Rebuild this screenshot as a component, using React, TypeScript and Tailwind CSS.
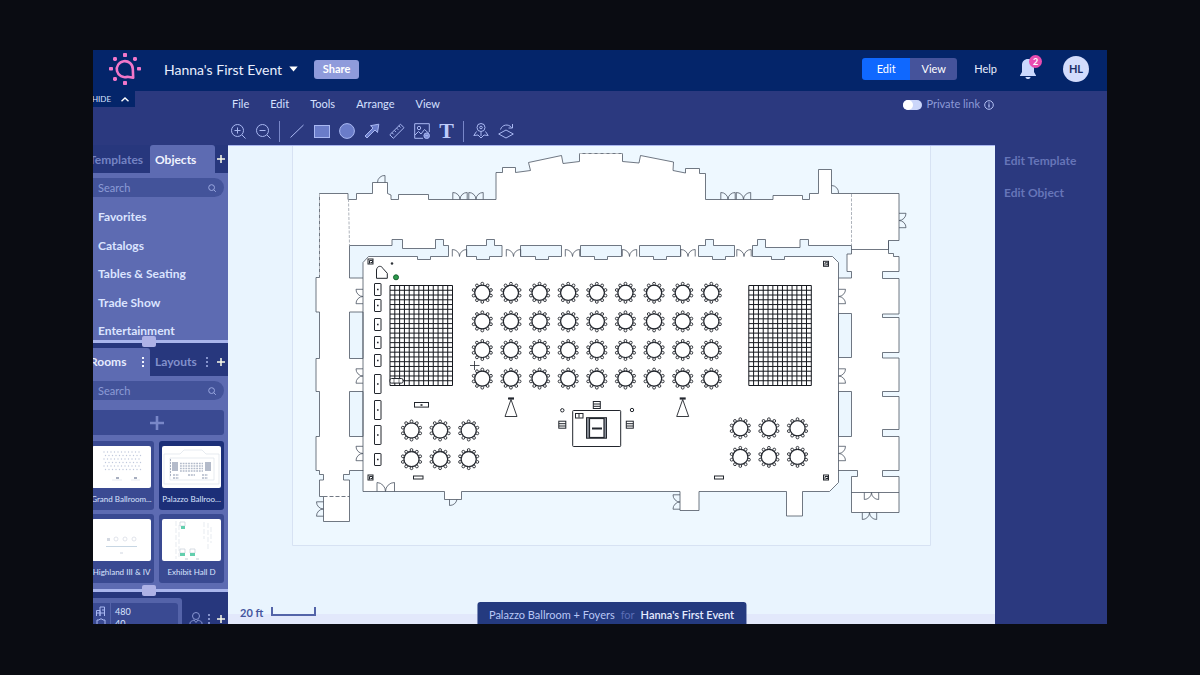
import React from "react";

const WALL = "#4d5663";
const VOID = "#ebf6fe";

const FOYER =
  "M319.5 193.5H348V199.5H356.5V193.5H372.5V182.5H387.5V193.5L391 195V199.5H398.5V194.5H428.5V199.5H496V172.5H502.5V167.5H515.5V172.5L530.5 170.5L528.5 162.5L561.5 155.5L563 163.5L579.5 161.5V153.5H622.5V161.5L639 163L640.5 155.5L673.5 162L673 170.5L685.5 173V168.5H699.5V173.5H705.5V199.5H773V195.5H802.5V199.5H809.5V193.5H818.5V169.5H831.5V193.5H899V240.5H888.5V253.5H893.5V256.5H899V271.5H882.5V278.5H899V314H882.5V317.5H899V352.5H882.5V358H899V391.5H882.5V396.5H899V429.5H882.5V436.5H899V470.5H882.5V476.5H899V512.5H851.5V476.5H857.5V470.5H838.5V482.5L829.5 491.5H802.5V516H786.5V491.5H699V510.5H680V491.5H461.5V499.5H444.5V491.5H363V470.5H349.5V474.5H343.5V480H349.5V521.5H323.5V496.5H319.5V480H323.5V474.5H319.5V470.5H316V436.5H319.5V391.5H316V358.5H319.5V312H316V277.5H319.5Z";

const VOIDS = [
  "M349.5 245.5H392V239.5H402.5V248.5H435.5V239.5H443.5V245.5H448.5V256.5H430.5V259.5H417.5V256.5H368.5L363 262.5V278H349.5Z",
  "M466.5 245.5H486.5V239.5H494.5V245.5H502V256.5H489.5V259.5H476.5V256.5H466.5Z",
  "M520.5 245.5H561.5V256.5H548.5V259.5H535.5V256.5H520.5Z",
  "M580.5 245.5H621.5V256.5H607.5V259.5H594.5V256.5H580.5Z",
  "M639.5 245.5H680.5V256.5H666.5V259.5H653.5V256.5H639.5Z",
  "M698.5 245.5H705.5V239.5H713.5V245.5H734.5V256.5H725.5V259.5H712.5V256.5H698.5Z",
  "M752.5 245.5H757.5V239.5H765.5V247.5H800V239.5H808.5V245.5H851.5V254H847V271.5H851.5V278H838.5V262.5L832.5 256.5H784.5V259.5H771.5V256.5H752.5Z",
  "M349.5 312H363V358.5H349.5Z",
  "M349.5 391.5H363V436.5H349.5Z",
  "M838.5 313.5H851.5V357.5H838.5Z",
  "M838.5 391.5H851.5V436.5H838.5Z",
];

/* Centre point and the direction in which each pair of leaves swings. */
const DOORS: [number, number, number][] = [
  [460, 199.5, 0], [476, 199.5, 0], [728, 199.5, 0], [743.5, 199.5, 0],
  [459.5, 256.5, 0], [513.5, 256.5, 0], [572.5, 256.5, 0], [629.5, 256.5, 0],
  [688, 256.5, 0], [744, 256.5, 0],
  [363, 296.5, -90], [363, 376, -90], [363, 453.5, -90],
  [323.5, 509, -90], [680, 502, -90],
  [838.5, 296.5, 90], [838.5, 376, 90], [838.5, 453.5, 90], [899, 220.5, 90],
  [871.5, 492.5, 180], [869.5, 512.5, 180],
];

const range = (n: number) => Array.from({ length: n }, (_, i) => i);

const TABLES: [number, number][] = [
  ...range(36).map((i): [number, number] => [482.3 + (i % 9) * 28.63, 292.8 + Math.floor(i / 9) * 28.6]),
  ...range(6).map((i): [number, number] => [411.5 + (i % 3) * 28.6, 430.5 + Math.floor(i / 3) * 28.6]),
  ...range(6).map((i): [number, number] => [740.3 + (i % 3) * 28.6, 428.3 + Math.floor(i / 3) * 28.6]),
];

const BOOTHS: [number, number][] = [
  [283.5, 12], [299.5, 12], [318.5, 12], [336.5, 12], [354.5, 12],
  [374.5, 19], [400.5, 19], [425.5, 19], [453.5, 12],
];

function DanceFloor({ x, y }: { x: number; y: number }) {
  const w = 62.5;
  const h = 100;
  const d =
    range(14).map((i) => `M${x + (i * w) / 13} ${y}v${h}`).join("") +
    range(22).map((i) => `M${x} ${y + (i * h) / 21}h${w}`).join("");
  return <path d={d} stroke="#15181e" strokeWidth="1" />;
}

function FloorPlan() {
  return (
    <svg
      viewBox="228 146 767 478"
      preserveAspectRatio="xMidYMin meet"
      className="absolute inset-0 h-full w-full"
      role="img"
      aria-label="Floor plan"
      fill="none"
    >
      <defs>
        <g id="table">
          <circle r="7.6" stroke="#22262d" strokeWidth="1.3" fill="#fff" />
          {range(10).map((i) => {
            const a = ((i * 36 - 90) * Math.PI) / 180;
            return (
              <circle key={i} cx={Math.cos(a) * 9.1} cy={Math.sin(a) * 9.1} r="1.4" stroke="#22262d" strokeWidth="0.9" fill="#fff" />
            );
          })}
        </g>
        <path id="doors" d="M-7.2 0V-7A7.2 7 0 0 1 0 0A7.2 7 0 0 1 7.2 -7V0" />
        <g id="corner">
          <rect x="-2.5" y="-2.5" width="5" height="5" />
          <path d="M-1 2V-1H2V1H0" />
        </g>
        <g id="screen">
          <path d="M0 1L-6 18H6Z" strokeWidth="0.9" />
          <path d="M-3 0H3" strokeWidth="2.2" />
        </g>
        <g id="rack">
          <rect x="-3.5" y="-3.5" width="7" height="7" />
          <path d="M-3.5 -1H3.5M-3.5 1.3H3.5" />
        </g>
      </defs>

      <path d="M292.5 145V545.5H930.5V145" fill="#eef8ff" stroke="#d7e2f3" />
      <path d={FOYER} fill="#fff" stroke={WALL} strokeWidth="0.8" />
      {VOIDS.map((d) => (
        <path key={d} d={d} fill={VOID} stroke={WALL} strokeWidth="0.8" />
      ))}

      <g stroke={WALL} strokeWidth="0.8">
        <path d="M363 278V471M838.5 278V471M851.5 249.5H888.5V240.5M851.5 492.5H899" />
        <path d="M851.5 194V245M348.5 199L349.5 245" stroke="#9aa1ab" strokeDasharray="3 1.5" />
        <path d="M323.5 496.5H349.5" strokeDasharray="4 2" />
        {DOORS.map(([x, y, r]) => (
          <use key={`${x}-${y}`} href="#doors" transform={`translate(${x} ${y}) rotate(${r})`} />
        ))}
        <path d="M377 491.500V482.500A9 9 0 0 1 385.500 491.500A9 9 0 0 1 394.500 482.500V491.500" />
        <path d="M385 182.5V175.5A7 7 0 0 0 377.5 182.5" />
        <path d="M831.5 185.5A7 7 0 0 1 838.5 193" />
        <path d="M449.5 499.5V505.5A8 8 0 0 0 457 499.5" />
      </g>
      <path d="M579.5 153.5H622.5M319.5 194V277" stroke="#fff" strokeOpacity="0.5" strokeWidth="1.4" strokeDasharray="3 3" />

      <g stroke="#22262d" strokeWidth="1">
        <DanceFloor x={390} y={285.5} />
        <DanceFloor x={748.8} y={285.5} />
        {TABLES.map(([x, y]) => (
          <use key={`${x}-${y}`} href="#table" x={x} y={y} />
        ))}
        {BOOTHS.map(([y, h]) => (
          <g key={y}>
            <rect x="374.5" y={y} width="6.5" height={h} rx="0.5" />
            <path d={`M377 ${y + h / 2}h1.6`} strokeWidth="1.3" />
          </g>
        ))}
        <path d="M376.500 278.300V270C377 265.500 381.500 265.300 383 268.500L387.300 273.300V278.300Z" fill="#fff" />
        <circle cx="392" cy="263.500" r="1" fill="#22262d" strokeWidth="0.5" />
        <circle cx="396" cy="277.300" r="2.5" fill="#2c9a4d" stroke="#17612e" />
        <rect x="390" y="378.500" width="13" height="4.600" rx="1.500" fill="#fff" />
        <path d="M394 378.500V383M399 378.500V383" strokeWidth="0.6" />
        <use href="#corner" x="370.500" y="261.500" />
        <use href="#corner" x="826" y="263.800" />
        <use href="#corner" x="370.500" y="477.500" />
        <use href="#corner" x="826" y="477.500" />
        <rect x="413.500" y="476" width="9.500" height="3" />
        <rect x="714.500" y="476" width="9" height="3" />
        <rect x="414.500" y="402.500" width="14" height="4.600" />
        <path d="M420.500 405h2" strokeWidth="1.6" />
        <use href="#screen" x="511" y="398.500" />
        <use href="#screen" x="682.700" y="398.500" />
        <rect x="572.700" y="410.500" width="48" height="36" rx="0.800" />
        <rect x="575.500" y="413.500" width="7.500" height="4.500" />
        <path d="M579 414v3.500" />
        <rect x="586.500" y="417.700" width="20" height="20.500" fill="#8a8f98" />
        <rect x="589.500" y="418.500" width="14.500" height="19" fill="#fff" strokeWidth="1.2" />
        <path d="M592 428.500h10" strokeWidth="2" />
        <use href="#rack" x="596.800" y="405" />
        <use href="#rack" x="562.300" y="424.700" />
        <use href="#rack" x="629.800" y="424.700" />
        <circle cx="562.300" cy="410.300" r="1.700" />
        <circle cx="632" cy="410" r="1.700" />
        <path d="M470 365.500H479.500M474.500 361V370" strokeWidth="0.8" />
      </g>
    </svg>
  );
}

function Logo() {
  return (
    <svg viewBox="0 0 32 32" className="h-8 w-8" fill="none" aria-hidden="true">
      <path d="M24.200 24.800L23.800 16A8 8 0 1 0 18.500 23.700Z" stroke="#f277c9" strokeWidth="2.600" strokeLinejoin="round" />
      <g fill="#f277c9">
        <rect x="14" y="0" width="4" height="4" rx="0.8" />
        <rect x="14" y="28" width="4" height="4" rx="0.8" />
        <rect x="0" y="14" width="4" height="3.6" rx="0.8" />
        <rect x="28" y="14" width="4" height="3.6" rx="0.8" />
        <rect x="4" y="4" width="4" height="4" rx="1.4" />
        <rect x="24" y="4" width="4" height="4" rx="1.4" />
        <rect x="4" y="24" width="4" height="4" rx="1.4" />
      </g>
    </svg>
  );
}

const TOOLS: { label: string; art: React.ReactNode }[] = [
  { label: "Zoom in", art: <><circle cx="7.5" cy="7.5" r="6" /><path d="M12 12L15.5 15.5M4.5 7.5H10.5M7.5 4.5V10.5" /></> },
  { label: "Zoom out", art: <><circle cx="7.5" cy="7.5" r="6" /><path d="M12 12L15.5 15.5M4.5 7.5H10.5" /></> },
  { label: "Line", art: <path d="M1.5 14.5L14.5 2" /> },
  { label: "Rectangle", art: <rect x="0.5" y="2.5" width="15" height="12" fill="#6a7cc9" /> },
  { label: "Ellipse", art: <circle cx="8" cy="8" r="7.4" fill="#6a7cc9" /> },
  { label: "Arrow", art: <path d="M1 13L9 5L6.500 2.700L14.800 1.200L13.500 9.500L11 7L3 15Z" fill="#6a7cc9" /> },
  { label: "Measure", art: <><path d="M0.8 11.8L11.5 1.2L15 4.7L4.3 15.3Z" /><path d="M3 9.7L4.7 11.4M5.3 7.4L7 9.1M7.6 5.1L9.3 6.8M9.9 2.8L11.6 4.5" /></> },
  { label: "Image", art: <><path d="M9 15.3H0.7V0.7H15.3V9" /><circle cx="5" cy="5" r="1.7" /><path d="M1 12L4.5 8.5L7 11L10.5 6.5L15 10.5" /><circle cx="12.7" cy="12.7" r="2.8" fill="#7f8fd6" /><path d="M11.3 12.7H14.1" /></> },
  { label: "Text", art: null },
  { label: "Seating map", art: <><circle cx="8" cy="4.5" r="4" /><circle cx="8" cy="4.5" r="1.3" /><path d="M8 8.5V13M3.5 8.5L0.8 12.5L5 12L8 15L11 12L15.2 12.5L12.5 8.5" /></> },
  { label: "Rotate view", art: <><path d="M8 7L15.3 11L8 15L0.7 11Z" /><path d="M2.5 6.5C4 1.5 10.5 0.5 13.5 4.5M14.5 1V5H10.5" /></> },
];

function Tool({ label, art }: { label: string; art: React.ReactNode }) {
  return (
    <button aria-label={label} className="flex h-5 w-[25px] items-center justify-center">
      {art ? (
        <svg viewBox="0 0 16 16" className="h-4 w-4" fill="none" stroke="#a9b8f2" strokeWidth="1">
          {art}
        </svg>
      ) : (
        <span className="font-['Liberation_Serif',serif] text-[22px] leading-5 font-bold text-[#bccbfa]">T</span>
      )}
    </button>
  );
}

function Plus({ label }: { label: string }) {
  return (
    <button aria-label={label} className="flex h-5 w-3 items-center justify-center">
      <svg viewBox="0 0 8 8" className="h-2 w-2" stroke="#fbfbe8" strokeWidth="1.5">
        <path d="M4 0V8M0 4H8" />
      </svg>
    </button>
  );
}

function Dots({ label, dim }: { label: string; dim?: boolean }) {
  return (
    <button aria-label={label} className="flex h-4 w-3 items-center justify-center">
      <svg viewBox="0 0 2 10" className="h-[10px] w-[2px]" fill={dim ? "#8593cd" : "#f0f3ff"}>
        <path d="M0 0h2v2H0zM0 4h2v2H0zM0 8h2v2H0z" />
      </svg>
    </button>
  );
}

function SearchBox({ label }: { label: string }) {
  return (
    <div className="mr-1 flex h-[19px] items-center rounded-r-full bg-[#43539a] pr-2 pl-[5px]">
      <input
        aria-label={label}
        placeholder="Search"
        className="min-w-0 flex-1 bg-transparent text-[11px] leading-4 text-white outline-none placeholder:text-[#8c9bd6]"
      />
      <svg viewBox="0 0 8 8" className="h-2 w-2" fill="none" stroke="#9aa8e0" aria-hidden="true">
        <circle cx="3.6" cy="3.6" r="2.9" />
        <path d="M5.8 5.8L7.8 7.8" />
      </svg>
    </div>
  );
}

function Splitter() {
  return (
    <div className="relative h-[3px] shrink-0 bg-[#a9b5ec]">
      <div className="absolute -top-1 left-[49px] h-[11px] w-[14px] rounded-[2px] bg-[#aeb2e6]" />
    </div>
  );
}

const GRAND = (
  <>
    {range(6).map((r) =>
      range(11).map((c) => <circle key={`${r}-${c}`} cx={12 + c * 3.5 + (r % 2) * 1.5} cy={6 + r * 3.5} r="0.7" fill="#bfc8dc" />),
    )}
    <path d="M24 32h3M42 32h3" stroke="#a7aebf" strokeWidth="2" />
    <path d="M20 34h10M39 34h9" stroke="#e7eaf1" />
  </>
);
const PALAZZO = (
  <>
    <path d="M2 8H18L22 4H40L44 8H57V38H2ZM8 12H52V34H8Z" fill="none" stroke="#dde2ea" strokeWidth="0.7" />
    <path d="M10 16h6v9h-6zM43 16h6v9h-6z" fill="#b4bbca" />
    <path d="M18 17.5h23M18 20h23M18 22.5h23M18 25h23" stroke="#b3bbca" strokeWidth="1.6" strokeDasharray="1.8 0.9" />
    <path d="M26 29h7M11 29h6M11 32h6M40 29h6M40 32h6" stroke="#b0b8c8" strokeWidth="1.4" strokeDasharray="2 0.8" />
    <path d="M8.5 13V31" stroke="#a9b1c2" strokeDasharray="2 1" />
  </>
);
const HIGHLAND = (
  <>
    <rect x="15" y="19" width="3" height="3" fill="#d3d8e1" />
    {[24, 33, 42].map((x) => <circle key={x} cx={x} cy="20" r="2" fill="none" stroke="#d5dae4" strokeWidth="0.7" />)}
    <path d="M14 27.5H45" stroke="#b9cbdc" strokeWidth="0.8" />
    <path d="M28 34h3" stroke="#cfd5e0" />
  </>
);
const EXHIBIT = (
  <>
    <path d="M14 2V40M17 6V38M42 3V20M46 4V30M49 8V24" stroke="#dde2e9" strokeWidth="0.7" strokeDasharray="5 2" />
    <path d="M18 3h5v4h-5zM18 30h5v4h-5zM28 30h5v4h-5z" fill="none" stroke="#c6ced8" strokeWidth="0.7" />
    <path d="M19 7h4v3h-4zM18 34h5v3h-5zM28 34h5v3h-5z" fill="#63cfae" />
    <path d="M23 40h3M34 40h3" stroke="#c3cbd6" />
  </>
);

const ROOMS = [
  { name: "Grand Ballroom...", art: GRAND },
  { name: "Palazzo Ballroo...", art: PALAZZO, selected: true },
  { name: "Highland III & IV", art: HIGHLAND },
  { name: "Exhibit Hall D", art: EXHIBIT },
];

const CATEGORIES = ["Favorites", "Catalogs", "Tables & Seating", "Trade Show", "Entertainment"];

function Sidebar() {
  return (
    <aside className="flex w-[135px] shrink-0 flex-col overflow-hidden bg-[#2b397f]">
      <button className="flex h-4 w-[42px] items-center justify-between bg-[#04256a] pr-[6px] text-[8px] text-[#dbe4ff]">
        <span className="-ml-px">HIDE</span>
        <svg viewBox="0 0 8 5" className="h-[5px] w-2" fill="none" stroke="#fff" strokeWidth="1.4" aria-hidden="true">
          <path d="M0.5 4.3L4 1L7.5 4.3" />
        </svg>
      </button>

      <div className="mt-[38px] flex h-7 shrink-0 items-center bg-[#27377d] text-[12px] font-bold">
        <button className="-ml-1 h-7 w-[61px] pt-px text-left text-[#7483c3]">Templates</button>
        <button className="h-7 w-[65px] rounded-t-[3px] bg-[#5d6bb2] pt-px pl-[5px] text-left text-[#f1f4ff]">Objects</button>
        <Plus label="Add objects tab" />
      </div>
      <div className="h-[167px] shrink-0 bg-[#5d6bb2] pt-[5px]">
        <SearchBox label="Search objects" />
        <ul className="mt-[6px] flex h-[142px] flex-col justify-between pl-[5px] text-[12px] font-bold text-[#dbe4ff]">
          {CATEGORIES.map((c) => (
            <li key={c} className="flex h-7 items-center"><a href="#objects">{c}</a></li>
          ))}
        </ul>
      </div>
      <Splitter />

      <div className="flex h-[33px] shrink-0 items-end bg-[#27377d] text-[12px] font-bold">
        <div className="flex h-7 w-[57px] items-center justify-between rounded-tr-[3px] bg-[#5d6bb2] pr-px">
          <button className="-ml-[3px] text-[#e6ecff]">Rooms</button>
          <Dots label="Rooms options" />
        </div>
        <div className="flex h-7 flex-1 items-center justify-between pr-px pl-[5px]">
          <button className="text-[#8290cc]">Layouts</button>
          <div className="flex items-center gap-[2px]">
            <Dots label="Layouts options" dim />
            <Plus label="Add room" />
          </div>
        </div>
      </div>
      <div className="shrink-0 bg-[#5d6bb2] pt-[5px] pb-[6px]">
        <SearchBox label="Search rooms" />
        <button aria-label="New room" className="mt-[10px] flex h-[25px] w-[131px] items-center justify-center rounded-r-[3px] bg-[#3a4a92] pr-1">
          <svg viewBox="0 0 14 14" className="h-[14px] w-[14px]" stroke="#7987c8" strokeWidth="2.6" aria-hidden="true">
            <path d="M7 0V14M0 7H14" />
          </svg>
        </button>
        <ul className="mt-[6px] -ml-1 grid grid-cols-2 gap-x-[5px] gap-y-1 pr-1">
          {ROOMS.map((r) => (
            <li key={r.name}>
              <button
                className={
                  r.selected
                    ? "flex h-[69px] w-full flex-col items-center rounded-[3px] bg-[#1c2f78] px-[3px] pt-[5px] text-[8px] text-[#dbe4ff]"
                    : "flex h-[69px] w-full flex-col items-center rounded-[3px] bg-[#3a4a92] px-[3px] pt-[5px] text-[8px] text-[#dbe4ff]"
                }
              >
                <svg viewBox="0 0 59 42" className="h-[42px] w-full rounded-[2px] bg-white" preserveAspectRatio="xMidYMid meet" aria-hidden="true">
                  {r.art}
                </svg>
                <span className="mt-[5px] leading-3 whitespace-nowrap">{r.name}</span>
              </button>
            </li>
          ))}
        </ul>
      </div>
      <Splitter />

      <div className="flex min-h-0 flex-1 items-start justify-between bg-[#27377d] pt-[6px] pr-px">
        <div className="h-10 w-[89px] shrink-0 rounded-tr-[3px] bg-[#5463a9] pt-[5px] pr-1">
          <div className="flex h-10 rounded-tr-[3px] bg-[#3a4a92] text-[9px] leading-3 text-[#dbe4ff]">
            <div className="w-[18px] border-r border-[#5463a9] pt-[3px] pl-[3px]">
              <svg viewBox="0 0 10 22" className="h-[22px] w-[10px]" fill="none" stroke="#a9b8f2" aria-hidden="true">
                <path d="M0.5 10V4.5H4V10M4 10V1H8.5V10M0.5 7H9M6 4H8.5M1 14h2l1-1h2l1 1h2v6H1z" />
              </svg>
            </div>
            <div className="pt-[3px] pl-1">
              <div>480</div>
              <div>40</div>
            </div>
          </div>
        </div>
        <div className="flex items-center pt-[11px]">
          <svg viewBox="0 0 14 16" className="h-4 w-[14px]" fill="none" stroke="#8896d2" aria-hidden="true">
            <circle cx="7" cy="5" r="3.5" />
            <path d="M1 15V12C1 10.5 3 10 5 9L7 11.5L9 9C11 10 13 10.5 13 12V15" />
          </svg>
          <Dots label="Guest options" dim />
          <Plus label="Add guests" />
        </div>
      </div>
    </aside>
  );
}

function Header() {
  return (
    <header className="flex h-[41px] shrink-0 items-center bg-[#04256a] pr-[18px] pb-[3px] pl-4 text-[#e9efff]">
      <Logo />
      <button className="ml-[23px] flex items-center gap-[7px] text-[14px]">
        Hanna's First Event
        <svg viewBox="0 0 9 6" className="h-[6px] w-[9px]" fill="#fff" aria-hidden="true">
          <path d="M0.3 0.5H8.7L4.5 5.5Z" />
        </svg>
      </button>
      <button className="ml-4 h-[19px] w-[45px] rounded-[3px] bg-[#8f9bdb] text-[11px] leading-4 font-bold text-white">Share</button>

      <div className="ml-auto flex h-[22px] overflow-hidden rounded-[3px] text-[11px] text-white">
        <button className="w-12 bg-[#0f68ff]">Edit</button>
        <button className="w-[47px] bg-[#45539b]">View</button>
      </div>
      <a href="#help" className="ml-[17px] text-[11px]">Help</a>
      <button aria-label="Notifications" className="relative ml-[22px] h-[22px] w-[18px]">
        <svg viewBox="0 0 18 22" className="h-[22px] w-[18px]" fill="#cbd8fd" aria-hidden="true">
          <path d="M9 1C12.5 1 15 3.5 15 7V14L17 17.5V18H1V17.5L3 14V7C3 3.5 5.5 1 9 1ZM6.5 19H11.5C11.5 21.8 6.5 21.8 6.5 19Z" />
        </svg>
        <span className="absolute -top-[3px] left-[10px] flex h-[13px] w-[13px] items-center justify-center rounded-full bg-[#ea4cb0] text-[9px] font-bold text-white">2</span>
      </button>
      <button aria-label="Account" className="ml-[26px] flex h-[26px] w-[26px] items-center justify-center rounded-full bg-[#d3dcfc] text-[11px] font-bold text-[#1b2c66]">HL</button>
    </header>
  );
}

function Toolbar() {
  return (
    <div className="h-[54px] shrink-0">
      <div className="flex h-[27px] items-center justify-between pl-1 text-[11px] text-[#d6e0ff]">
        <nav className="flex gap-[21px]">
          <button>File</button>
          <button>Edit</button>
          <button>Tools</button>
          <button>Arrange</button>
          <button>View</button>
        </nav>
        <div className="flex items-center">
          <label className="flex items-center gap-1 text-[#8d9bd8]">
            <input
              type="checkbox"
              className="flex h-[10px] w-[19px] appearance-none items-center rounded-full bg-[#cbd6fa] before:h-[10px] before:w-[10px] before:rounded-full before:bg-white before:content-['']"
            />
            Private link
          </label>
          <button aria-label="About private link" className="mr-px ml-1">
            <svg viewBox="0 0 10 10" className="h-[10px] w-[10px]" fill="none" stroke="#b5c2f5" aria-hidden="true">
              <circle cx="5" cy="5" r="4.3" />
              <path d="M5 4.3V7.5M5 2.5V3.5" strokeWidth="1.3" />
            </svg>
          </button>
        </div>
      </div>
      <div className="-ml-[3px] flex h-[26px] items-center">
        {TOOLS.slice(0, 2).map((t) => <Tool key={t.label} {...t} />)}
        <span className="mx-1 h-[21px] w-px bg-[#7887c9]" />
        {TOOLS.slice(2, 9).map((t) => <Tool key={t.label} {...t} />)}
        <span className="mx-1 h-[21px] w-px bg-[#7887c9]" />
        {TOOLS.slice(9).map((t) => <Tool key={t.label} {...t} />)}
      </div>
    </div>
  );
}

export default function App() {
  return (
    <div className="flex h-screen bg-[#0a0c12] px-[93px] pt-[50px] pb-[51px] font-['Lato',sans-serif]">
      <div className="flex min-w-0 flex-1 flex-col overflow-hidden bg-[#2b397f]">
        <Header />
        <div className="flex min-h-0 flex-1">
          <Sidebar />
          <main className="flex min-w-0 flex-1 flex-col">
            <Toolbar />
            <div className="relative flex-1 overflow-hidden border-t border-[#aab6ee] bg-[#e9f4fe]">
              <div className="absolute inset-x-0 bottom-0 h-[10px] bg-[#e2e8fb]" />
              <FloorPlan />
              <div className="absolute bottom-[3px] left-3 flex items-center gap-2 text-[11px] leading-4 font-bold text-[#45559f]">
                20 ft
                <span className="mt-[-3px] h-[9px] w-[45px] border-2 border-t-0 border-[#5363a8]" />
              </div>
              <div className="absolute bottom-0 left-1/2 flex h-[22px] -translate-x-1/2 items-center gap-[6px] rounded-t-[3px] bg-[#243a7f] px-3 pt-1 text-[11px] whitespace-nowrap text-[#b9c8f6]">
                <span>Palazzo Ballroom + Foyers</span>
                <span className="text-[#5b6db5]">for</span>
                <span className="font-semibold text-[#e4ebff]">Hanna's First Event</span>
              </div>
            </div>
          </main>
          <aside className="w-28 shrink-0 pt-[62px] pl-[9px] text-[12px] leading-4 font-bold text-[#6675b8]">
            <h2>Edit Template</h2>
            <h2 className="mt-4">Edit Object</h2>
          </aside>
        </div>
      </div>
    </div>
  );
}
